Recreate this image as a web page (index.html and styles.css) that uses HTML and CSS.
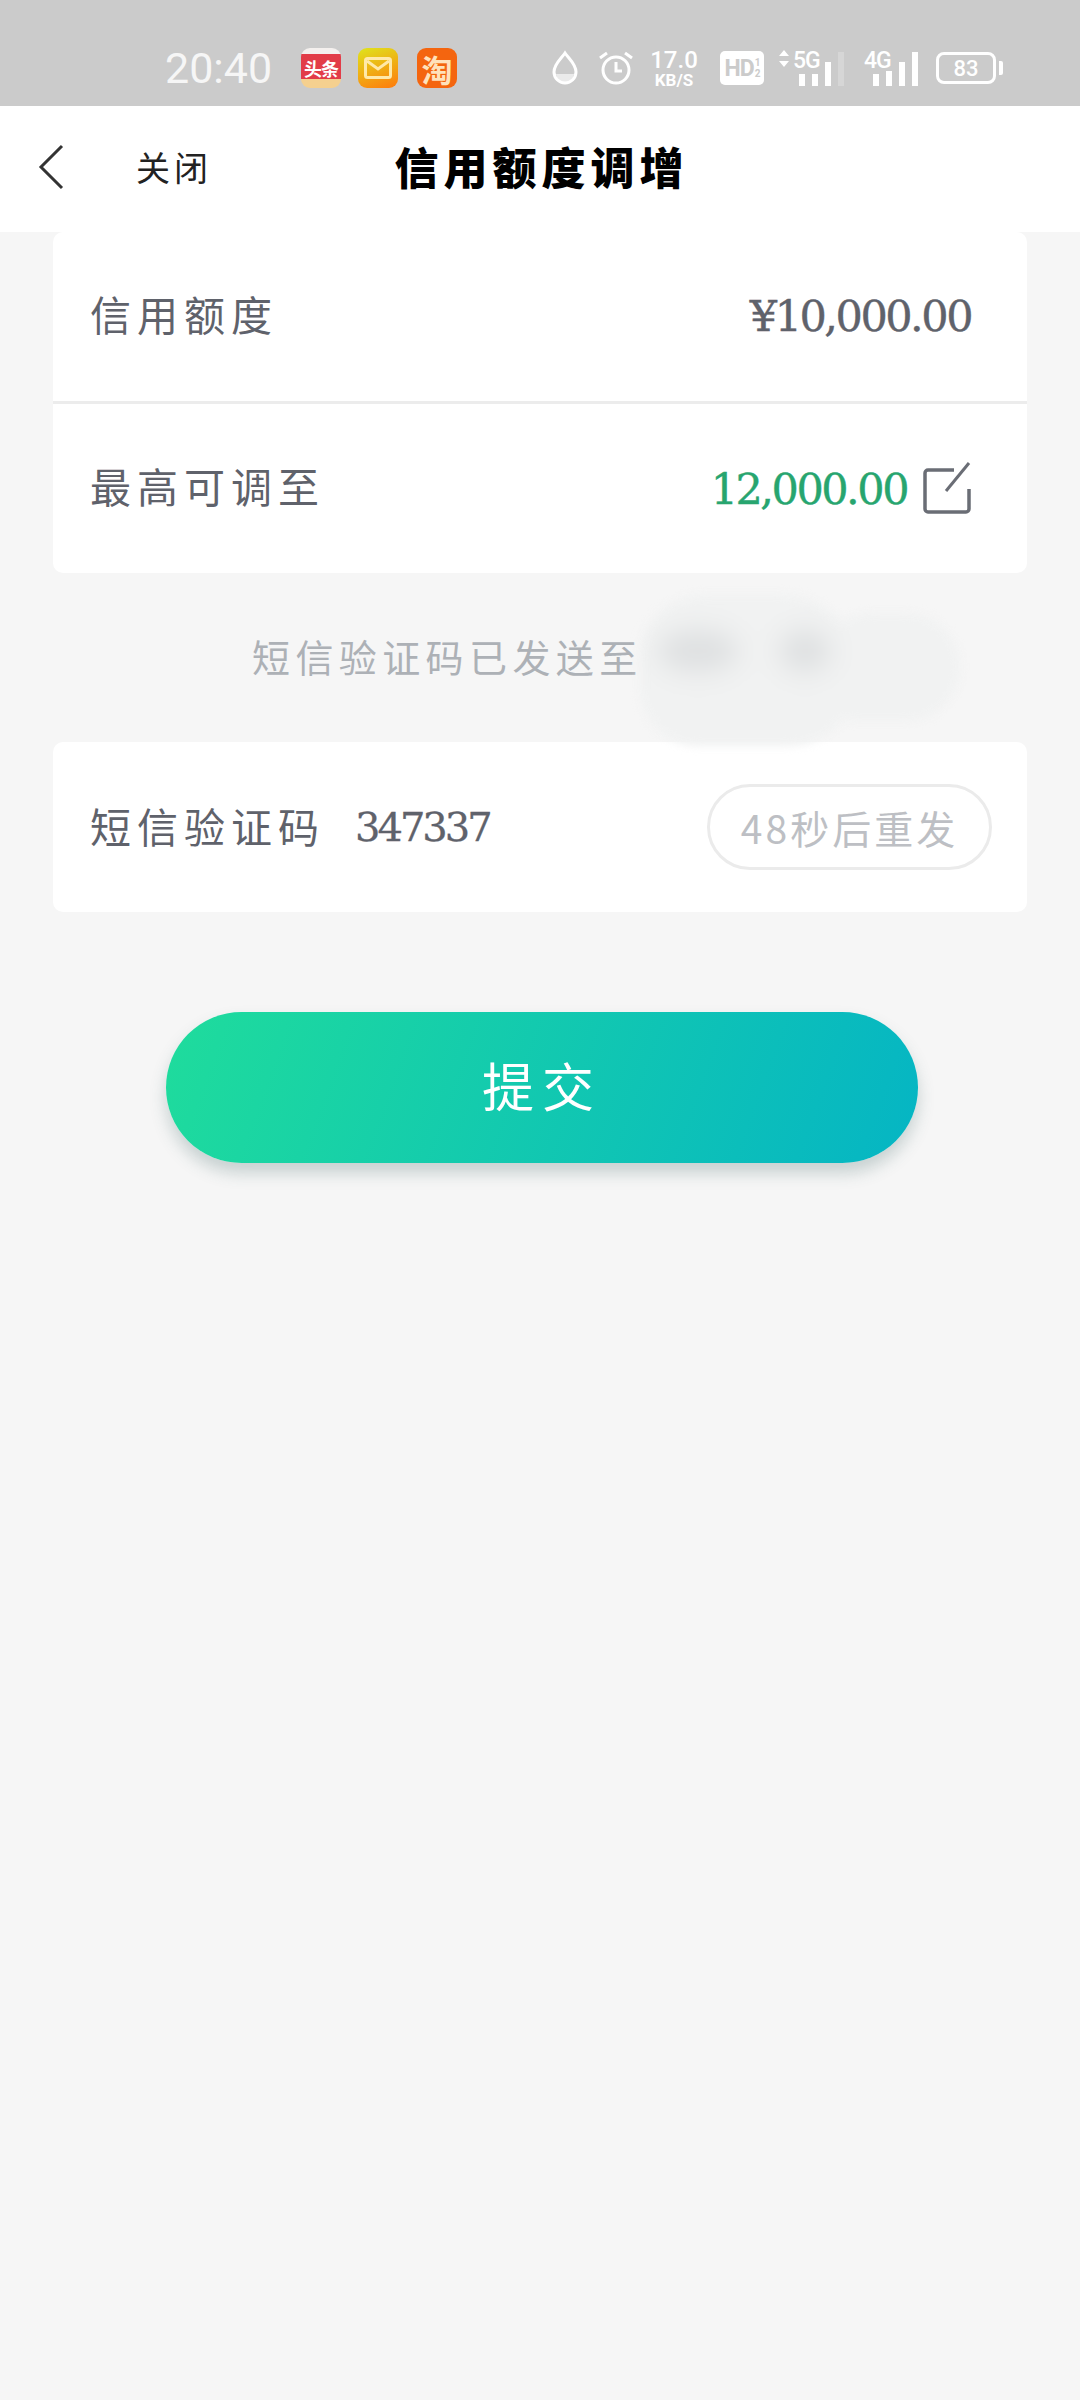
FILE: index.html
```html
<!DOCTYPE html>
<html lang="zh-CN">
<head>
    <meta charset="UTF-8">
    <meta name="viewport" content="width=device-width, initial-scale=1.0">
    <title>信用额度调增</title>
    <link rel="stylesheet" href="styles.css">
</head>
<body>
    <div class="status-bar">
        <span class="time">20:40</span>
        <div class="app-icons">
            <span class="app app-news"><b>头条</b></span>
            <span class="app app-mail">
                <svg width="28" height="22" viewBox="0 0 28 22"><rect x="1.5" y="1.5" width="25" height="19" rx="2" fill="none" stroke="#ffe9a8" stroke-width="3"/><path d="M3 4l11 8 11-8" fill="none" stroke="#ffe9a8" stroke-width="3"/></svg>
            </span>
            <span class="app app-taobao">淘</span>
        </div>
        <div class="status-right">
            <svg class="ic-drop" width="28" height="36" viewBox="0 0 28 36"><path d="M14 3c4 6 11 11 11 19a11 11 0 0 1-22 0C3 14 10 9 14 3z" fill="none" stroke="#fff" stroke-width="3"/><path d="M5 24h18a9 9 0 0 1-18 0z" fill="#fff" opacity=".6"/></svg>
            <svg class="ic-alarm" width="36" height="36" viewBox="0 0 36 36"><circle cx="18" cy="20" r="13" fill="none" stroke="#fff" stroke-width="3"/><path d="M18 12v9h6M2 8l7-5M34 8l-7-5" fill="none" stroke="#fff" stroke-width="3"/></svg>
            <div class="speed"><span>17.0</span><small>KB/S</small></div>
            <div class="hd"><span>HD</span><small>1<br>2</small></div>
            <div class="signal sig-5g">
                <svg class="arrows" width="12" height="17" viewBox="0 0 12 17"><path d="M6 0l5 6H1zM6 17l5-6H1z" fill="#fff"/></svg>
                <span class="net">5G</span>
                <div class="bars">
                    <i class="b1"></i><i class="b2"></i><i class="b3"></i><i class="b4 off"></i>
                </div>
            </div>
            <div class="signal sig-4g">
                <span class="net">4G</span>
                <div class="bars">
                    <i class="b1"></i><i class="b2"></i><i class="b3"></i><i class="b4"></i>
                </div>
            </div>
            <div class="battery"><span>83</span></div>
        </div>
    </div>

    <header class="nav">
        <svg class="back" width="28" height="46" viewBox="0 0 28 46"><path d="M25 2L4 23l21 21" fill="none" stroke="#333" stroke-width="3"/></svg>
        <span class="close">关闭</span>
        <h1>信用额度调增</h1>
    </header>

    <section class="card">
        <div class="row row-line">
            <span class="label">信用额度</span>
            <span class="amount">¥10,000.00</span>
        </div>
        <div class="row">
            <span class="label">最高可调至</span>
            <div class="limit">
                <span class="amount green">12,000.00</span>
                <svg width="48" height="54" viewBox="0 0 48 54"><path d="M31 9H5a3 3 0 0 0-3 3v36a3 3 0 0 0 3 3h38a3 3 0 0 0 3-3V28" fill="none" stroke="#6a6d75" stroke-width="3.5"/><path d="M23 30L46 2" fill="none" stroke="#6a6d75" stroke-width="3"/></svg>
            </div>
        </div>
    </section>

    <div class="hint">
        <span>短信验证码已发送至</span>
        <div class="smudge"><i class="spot-a"></i><i class="spot-b"></i></div>
    </div>

    <section class="card">
        <div class="row row-short">
            <div class="code">
                <span class="label">短信验证码</span>
                <span class="code-val">347337</span>
            </div>
            <span class="resend">48秒后重发</span>
        </div>
    </section>

    <button class="submit"><span>提交</span></button>
</body>
</html>
```

FILE: styles.css
```css
* {
    box-sizing: border-box;
}

body {
    margin: 0;
    width: 1080px;
    height: 2400px;
    overflow: hidden;
    background: #f6f6f6;
    font-family: "Noto Sans CJK SC", "DejaVu Serif", serif;
    color: #5f626b;
}

/* status bar */
.status-bar {
    height: 106px;
    background: #cbcbcb;
    display: flex;
    align-items: center;
    padding: 30px 0 0 165px;
    color: #fff;
    font-family: Roboto, sans-serif;
}

.time {
    font-size: 43px;
    color: #f6f6f6;
    width: 136px;
}

.app-icons {
    display: flex;
    gap: 17px;
}

.app {
    width: 40px;
    height: 40px;
    border-radius: 9px;
    display: flex;
    align-items: center;
    justify-content: center;
    color: #fff;
    font-family: "Noto Sans CJK SC", sans-serif;
}

.app-news {
    background: linear-gradient(#f4f0ee 0 14%, #e23c48 14% 78%, #f5d08f 78%);
    font-size: 18px;
    letter-spacing: -1px;
}

.app-mail {
    background: linear-gradient(160deg, #dfe41c, #ff7a0c);
}

.app-taobao {
    margin-left: 2px;
    background: #f4650f;
    color: #ffe2bb;
    font-size: 31px;
    font-weight: 700;
}

.status-right {
    display: flex;
    align-items: center;
    margin-left: 94px;
    height: 40px;
}

.ic-drop {
    margin-right: 19px;
}

.ic-alarm {
    margin-right: 15px;
}

.speed {
    width: 50px;
    display: flex;
    flex-direction: column;
    align-items: center;
    font-size: 24px;
    line-height: 24px;
    font-weight: 500;
    margin-right: 21px;
}

.speed small {
    font-size: 17px;
    line-height: 17px;
    font-weight: 700;
}

.hd {
    width: 44px;
    height: 34px;
    background: #fff;
    border-radius: 5px;
    color: #cbcbcb;
    display: flex;
    align-items: center;
    justify-content: center;
    gap: 1px;
    font-size: 23px;
    font-weight: 700;
    margin-right: 14px;
    letter-spacing: -1px;
}

.hd small {
    font-size: 10px;
    line-height: 11px;
}

.signal {
    position: relative;
    height: 36px;
}

.sig-5g {
    width: 66px;
    margin-right: 20px;
}

.sig-4g {
    width: 54px;
    margin-right: 18px;
}

.arrows {
    position: absolute;
    left: 0;
    top: 0;
}

.net {
    position: absolute;
    left: 0;
    top: -3px;
    font-size: 23px;
    font-weight: 500;
    letter-spacing: -1px;
    white-space: nowrap;
}

.sig-5g .net {
    left: 15px;
}

.bars {
    position: absolute;
    right: 0;
    bottom: 0;
    display: flex;
    align-items: flex-end;
    gap: 7px;
}

.bars i {
    width: 6px;
    background: #fff;
}

.bars .b1 { height: 12px; }
.bars .b2 { height: 12px; }
.bars .b3 { height: 24px; }
.bars .b4 { height: 34px; }
.bars .off { background: #d6d6d6; }

.sig-4g .b1 { height: 12px; }
.sig-4g .b2 { height: 15px; }
.sig-4g .b3 { height: 24px; }

.battery {
    position: relative;
    width: 60px;
    height: 32px;
    border: 3px solid #fff;
    border-radius: 8px;
    display: flex;
    align-items: center;
    justify-content: center;
    font-size: 22px;
    font-weight: 500;
}

/* battery cap */
.battery::after {
    content: "";
    position: absolute;
    right: -10px;
    top: 6px;
    width: 4px;
    height: 14px;
    background: #fff;
    border-radius: 0 2px 2px 0;
}

/* nav */
.nav {
    position: relative;
    height: 126px;
    background: #fff;
    display: flex;
    align-items: center;
    padding: 0 0 6px 37px;
}

.back {
    margin-top: 2px;
}

.close {
    margin-left: 71px;
    font-size: 34px;
    letter-spacing: 4px;
    color: #222;
}

.nav h1 {
    position: absolute;
    left: 0;
    right: 0;
    margin: 0;
    padding-left: 3px;
    text-align: center;
    font-size: 44px;
    font-weight: 900;
    letter-spacing: 5px;
    color: #000;
}

/* cards */
.card {
    margin: 0 53px;
    background: #fff;
    border-radius: 10px;
}

.row {
    display: flex;
    align-items: center;
    justify-content: space-between;
    height: 169px;
    padding: 0 56px 4px 37px;
}

.row-line {
    height: 172px;
    border-bottom: 3px solid #ececec;
}

.label {
    font-size: 41px;
    letter-spacing: 6px;
    margin-bottom: 4px;
}

.amount {
    font-family: "DejaVu Serif", serif;
    font-size: 43px;
    letter-spacing: -2.5px;
    -webkit-text-stroke: 0.4px currentColor;
    margin-top: 2px;
}

.green {
    color: #27a56f;
}

.limit {
    display: flex;
    align-items: center;
    gap: 16px;
    margin-top: 3px;
}

.hint {
    position: relative;
    height: 169px;
    padding: 0 0 4px 252px;
    display: flex;
    align-items: center;
    font-size: 38px;
    letter-spacing: 5.4px;
    color: #adb1b6;
}

/* smeared-out phone number */
.smudge {
    position: absolute;
    left: 640px;
    top: 21px;
    width: 320px;
    height: 154px;
    filter: blur(4px);
}

.smudge::before,
.smudge::after {
    content: "";
    position: absolute;
    background: #f1f2f2;
}

.smudge::before {
    left: 0;
    top: 0;
    width: 220px;
    height: 152px;
    border-radius: 90px 110px 100px 80px;
}

.smudge::after {
    right: 0;
    top: 19px;
    width: 150px;
    height: 108px;
    border-radius: 70px 60px 60px 50px;
}

.smudge i {
    position: absolute;
    z-index: 1;
    top: 36px;
    height: 42px;
    background: #dee0e1;
    border-radius: 50%;
    filter: blur(12px);
}

.spot-a {
    left: 18px;
    width: 80px;
}

.spot-b {
    left: 140px;
    width: 50px;
}

.code {
    display: flex;
    align-items: center;
    gap: 30px;
}

.code-val {
    font-family: "DejaVu Serif", serif;
    font-size: 40px;
    letter-spacing: -3px;
    -webkit-text-stroke: 0.3px currentColor;
}

.row-short {
    height: 170px;
    padding: 2px 35px 2px 37px;
}

.resend {
    width: 285px;
    height: 86px;
    border: 3px solid #ebebeb;
    border-radius: 43px;
    display: flex;
    align-items: center;
    justify-content: center;
    font-size: 39px;
    letter-spacing: 3px;
    color: #bdbfc4;
}

.submit {
    display: block;
    margin: 100px 0 0 166px;
    width: 752px;
    height: 151px;
    border: 0;
    padding: 0 0 6px;
    border-radius: 76px;
    background: linear-gradient(110deg, #1fdc9c, #05b5c4);
    box-shadow: 0 10px 16px rgba(60, 100, 100, 0.25);
    color: #fff;
    font-family: inherit;
    font-size: 52px;
    letter-spacing: 8px;
}
```
